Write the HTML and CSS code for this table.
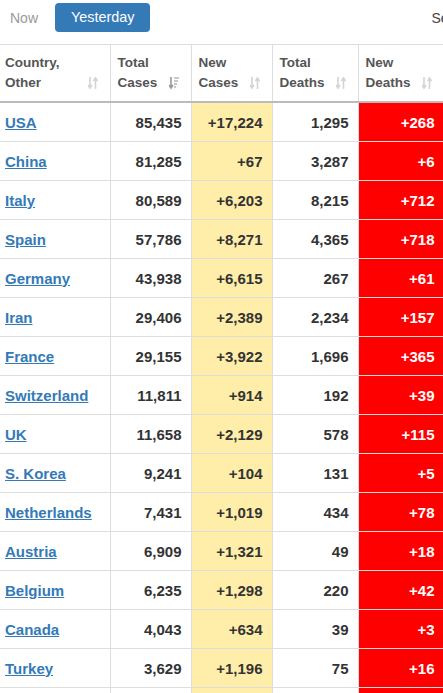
FILE: index.html
```html
<!DOCTYPE html>
<html>
<head>
<meta charset="utf-8">
<link rel="stylesheet" href="styles.css">
</head>
<body>
<div class="page">
  <div class="topbar">
    <span class="tab">Now</span>
    <span class="btn">Yesterday</span>
    <span class="search">Search:</span>
  </div>
  <table class="tbl">
    <colgroup>
      <col class="c1"><col class="c2"><col class="c3"><col class="c4"><col class="c5">
    </colgroup>
    <thead>
      <tr>
        <th>Country,<br>Other<svg class="sort" viewBox="0 0 10 14"><path d="M2 1v10M0 9l2 3 2-3M7.5 13V3M5.5 5l2-3 2 3" fill="none" stroke="#d4d4d4" stroke-width="1.6"/></svg></th>
        <th>Total<br>Cases<svg class="sort" viewBox="0 0 10 14"><path d="M2 1v10M0 9l2 3 2-3" fill="none" stroke="#9a9a9a" stroke-width="1.6"/><path d="M5 2h5M5 5h4M5 8h3M5 11h2" fill="none" stroke="#b8b8b8" stroke-width="1.4"/></svg></th>
        <th>New<br>Cases<svg class="sort" viewBox="0 0 10 14"><path d="M2 1v10M0 9l2 3 2-3M7.5 13V3M5.5 5l2-3 2 3" fill="none" stroke="#d4d4d4" stroke-width="1.6"/></svg></th>
        <th>Total<br>Deaths<svg class="sort" viewBox="0 0 10 14"><path d="M2 1v10M0 9l2 3 2-3M7.5 13V3M5.5 5l2-3 2 3" fill="none" stroke="#d4d4d4" stroke-width="1.6"/></svg></th>
        <th>New<br>Deaths<svg class="sort" viewBox="0 0 10 14"><path d="M2 1v10M0 9l2 3 2-3M7.5 13V3M5.5 5l2-3 2 3" fill="none" stroke="#d4d4d4" stroke-width="1.6"/></svg></th>
      </tr>
    </thead>
    <tbody>
      <tr><td><a href="#">USA</a></td><td>85,435</td><td class="nc">+17,224</td><td>1,295</td><td class="nd">+268</td></tr>
      <tr><td><a href="#">China</a></td><td>81,285</td><td class="nc">+67</td><td>3,287</td><td class="nd">+6</td></tr>
      <tr><td><a href="#">Italy</a></td><td>80,589</td><td class="nc">+6,203</td><td>8,215</td><td class="nd">+712</td></tr>
      <tr><td><a href="#">Spain</a></td><td>57,786</td><td class="nc">+8,271</td><td>4,365</td><td class="nd">+718</td></tr>
      <tr><td><a href="#">Germany</a></td><td>43,938</td><td class="nc">+6,615</td><td>267</td><td class="nd">+61</td></tr>
      <tr><td><a href="#">Iran</a></td><td>29,406</td><td class="nc">+2,389</td><td>2,234</td><td class="nd">+157</td></tr>
      <tr><td><a href="#">France</a></td><td>29,155</td><td class="nc">+3,922</td><td>1,696</td><td class="nd">+365</td></tr>
      <tr><td><a href="#">Switzerland</a></td><td>11,811</td><td class="nc">+914</td><td>192</td><td class="nd">+39</td></tr>
      <tr><td><a href="#">UK</a></td><td>11,658</td><td class="nc">+2,129</td><td>578</td><td class="nd">+115</td></tr>
      <tr><td><a href="#">S. Korea</a></td><td>9,241</td><td class="nc">+104</td><td>131</td><td class="nd">+5</td></tr>
      <tr><td><a href="#">Netherlands</a></td><td>7,431</td><td class="nc">+1,019</td><td>434</td><td class="nd">+78</td></tr>
      <tr><td><a href="#">Austria</a></td><td>6,909</td><td class="nc">+1,321</td><td>49</td><td class="nd">+18</td></tr>
      <tr><td><a href="#">Belgium</a></td><td>6,235</td><td class="nc">+1,298</td><td>220</td><td class="nd">+42</td></tr>
      <tr><td><a href="#">Canada</a></td><td>4,043</td><td class="nc">+634</td><td>39</td><td class="nd">+3</td></tr>
      <tr><td><a href="#">Turkey</a></td><td>3,629</td><td class="nc">+1,196</td><td>75</td><td class="nd">+16</td></tr>
      <tr><td></td><td></td><td class="nc"></td><td></td><td class="nd"></td></tr>
    </tbody>
  </table>
</div>
</body>
</html>
```

FILE: styles.css
```css
html, body {
  margin: 0;
  padding: 0;
  background: #fff;
}
.page {
  width: 443px;
  height: 693px;
  overflow: hidden;
  font-family: "Liberation Sans", Arial, sans-serif;
}
.topbar {
  display: flex;
  align-items: center;
  height: 44px;
  white-space: nowrap;
  font-size: 14px;
}
.tab {
  color: #999;
  margin-left: 10px;
  padding-bottom: 9px;
}
.btn {
  margin-left: 17px;
  margin-bottom: 9px;
  background: #337ab7;
  color: #fff;
  border-radius: 4px;
  height: 29px;
  line-height: 29px;
  padding: 0 15px 0 16px;
  font-size: 14.4px;
}
.search {
  margin-left: 282px;
  color: #444;
  padding-bottom: 9px;
}
.tbl {
  table-layout: fixed;
  border-collapse: collapse;
  width: 444px;
}
.c1 { width: 110px; }
.c2 { width: 81px; }
.c3 { width: 81px; }
.c4 { width: 86px; }
.c5 { width: 86px; }
.tbl th {
  position: relative;
  text-align: left;
  vertical-align: top;
  font-size: 13.5px;
  font-weight: bold;
  color: #555;
  line-height: 20px;
  padding: 8px 5px 8px 7px;
  height: 39px;
  border: 1px solid #ddd;
  border-bottom: 2px solid #bbb;
}
.tbl th:first-child {
  padding-left: 5px;
  border-left: none;
}
.sort {
  position: absolute;
  right: 12px;
  bottom: 11px;
  width: 10px;
  height: 14px;
}
.tbl td {
  height: 38px;
  padding: 0 9px 0 5px;
  border: 1px solid #ddd;
  font-size: 15px;
  font-weight: bold;
  color: #333;
  text-align: right;
  vertical-align: middle;
  white-space: nowrap;
}
.tbl td:first-child {
  text-align: left;
  border-left: none;
}
.tbl td a {
  color: #337ab7;
  text-decoration: underline;
}
.tbl td.nc {
  background: #ffeeaa;
}
.tbl td.nd {
  background: #ff0000;
  color: #fff;
}
```
